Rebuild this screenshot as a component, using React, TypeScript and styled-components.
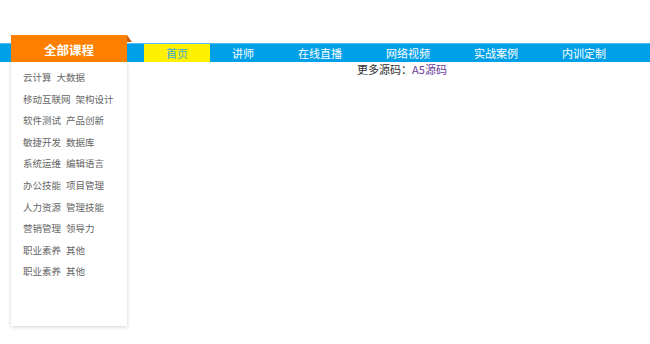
import React from 'react'
import styled, { createGlobalStyle } from "styled-components";

const GlobalStyle = createGlobalStyle`
  body {
    margin: 0;
    background: #fff;
    font-family: "Noto Sans CJK SC", "Noto Sans", sans-serif;
  }
`;

const navItems = ["首页", "讲师", "在线直播", "网络视频", "实战案例", "内训定制"];

const categories: string[][] = [
  ["云计算", "大数据"],
  ["移动互联网", "架构设计"],
  ["软件测试", "产品创新"],
  ["敏捷开发", "数据库"],
  ["系统运维", "编辑语言"],
  ["办公技能", "项目管理"],
  ["人力资源", "管理技能"],
  ["营销管理", "领导力"],
  ["职业素养", "其他"],
  ["职业素养", "其他"],
];

export default function App() {
  return (
    <>
      <GlobalStyle />
      <Page>
        <NavBar>
          {navItems.map((item, i) => (
            <NavItem key={item} $active={i === 0}>{item}</NavItem>
          ))}
        </NavBar>
        <Content>
          更多源码：<SourceLink href="#">A5源码</SourceLink>
        </Content>
        <Category>
          <CategoryHead>全部课程</CategoryHead>
          <CategoryPanel>
            {categories.map((row, i) => (
              <CategoryRow key={i}>
                {row.map((name) => (
                  <CategoryLink key={name}>{name}</CategoryLink>
                ))}
              </CategoryRow>
            ))}
          </CategoryPanel>
        </Category>
      </Page>
    </>
  );
}

const Page = styled.div`
  position: relative;
  padding-top: 43px;
  min-height: 301px;
`;

const NavBar = styled.ul`
  display: flex;
  margin: 0;
  padding: 0 0 0 144px;
  list-style: none;
  height: 18px;
  background: #00a0e9;
  border-top: 1px solid #4fbdf0;
`;

const NavItem = styled.li<{ $active?: boolean }>`
  padding: 0 22px;
  line-height: 18px;
  font-size: 11px;
  color: ${(props) => (props.$active ? "#3aaad6" : "#fff")};
  background: ${(props) => (props.$active ? "#fff100" : "transparent")};
`;

const Content = styled.div`
  padding-left: 154px;
  text-align: center;
  font-size: 11px;
  line-height: 15px;
  color: #333;
`;

const SourceLink = styled.a`
  color: #6a3c9c;
  text-decoration: none;
`;

const Category = styled.div`
  position: absolute;
  left: 11px;
  top: 35px;
  width: 116px;
`;

const CategoryHead = styled.div`
  position: relative;
  height: 27px;
  line-height: 29px;
  text-align: center;
  background: #ff8000;
  color: #fff;
  font-size: 12.5px;
  font-weight: bold;

  &::after {
    content: "";
    position: absolute;
    top: 0;
    right: -5px;
    border-left: 5px solid #c8600c;
    border-top: 7px solid transparent;
  }
`;

const CategoryPanel = styled.div`
  height: 259px;
  padding: 5px 0 0 12px;
  background: #fff;
  box-shadow: 0 1px 4px rgba(0, 0, 0, 0.18);
`;

const CategoryRow = styled.div`
  display: flex;
  gap: 5px;
  height: 21.6px;
  line-height: 21.6px;
`;

const CategoryLink = styled.span`
  font-size: 9.5px;
  color: #666;
`;
